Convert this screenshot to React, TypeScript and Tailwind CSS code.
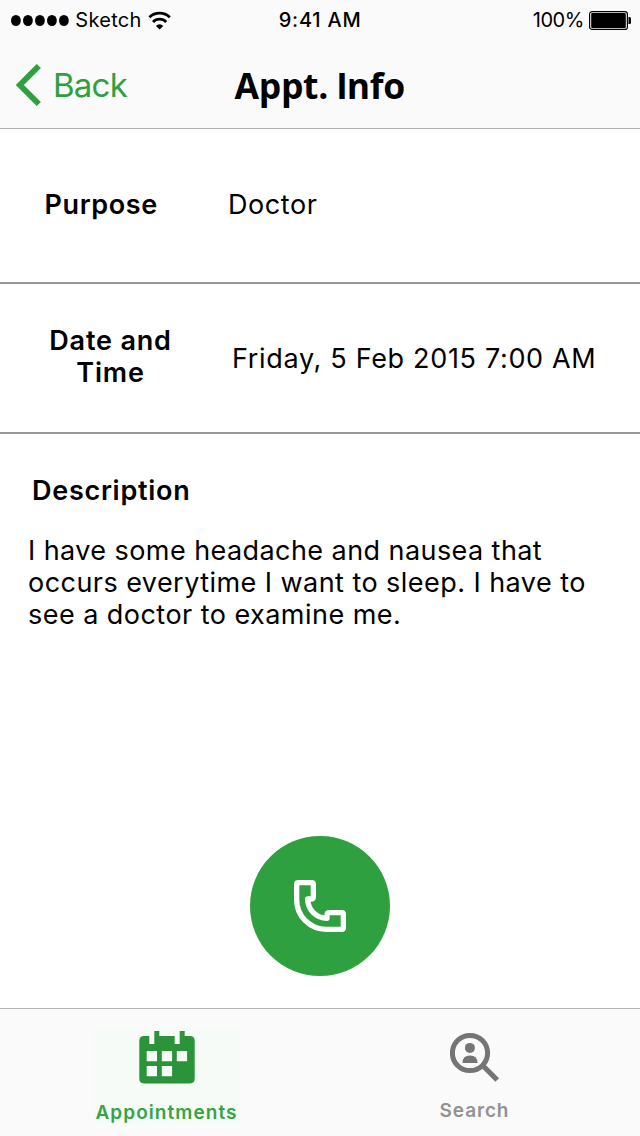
import React from 'react';

function StatusBar() {
  return (
    <div className="grid h-10 grid-cols-[1fr_84px_1fr] items-center text-[20px] leading-10">
      <div className="flex items-center pl-[11px]">
        <svg className="h-[11px] w-[58px]" viewBox="0 0 58 11" fill="#000">
          {[5, 17, 29, 41, 53].map((cx) => (
            <ellipse key={cx} cx={cx - 0.1} cy="5.5" rx="4.9" ry="5.5" />
          ))}
        </svg>
        <span className="ml-[6.3px] w-[73px] tracking-[0.28px]">Sketch</span>
        <svg className="h-[19px] w-[24px]" viewBox="0 0 24 19" fill="none" stroke="#000" strokeWidth="2.8">
          <path d="M1.4 6.2A14.8 14.8 0 0 1 21.8 6.2" />
          <path d="M5 10.9A9.3 9.3 0 0 1 18.2 10.9" />
          <path d="M11.6 18.6L7.9 14.9A5.2 5.2 0 0 1 15.3 14.9Z" fill="#000" stroke="none" />
        </svg>
      </div>
      <span className="whitespace-nowrap pl-[0.7px] font-medium tracking-[0.78px]">9:41 AM</span>
      <div className="flex items-center justify-end pr-[9px]">
        <span className="w-[56.3px] tracking-[-0.45px]">100%</span>
        <svg className="h-[20px] w-[42px]" viewBox="0 0 42 20">
          <rect x="0.6" y="1.6" width="37.8" height="17.8" rx="2.5" fill="none" stroke="#000" strokeWidth="1.2" />
          <rect x="2.2" y="3" width="34.6" height="15" rx="1" fill="#000" />
          <path d="M39.5 7H40.5Q42 7 42 8.5V12.5Q42 14 40.5 14H39.5Z" fill="#000" />
        </svg>
      </div>
    </div>
  );
}

function NavBar() {
  return (
    <div className="grid h-[88px] grid-cols-[1fr_172px_1fr] items-center pt-[2px]">
      <button className="flex items-center pl-[16px] text-[#2fa03f]">
        <svg className="h-[42px] w-[26px]" viewBox="0 0 26 42" fill="none" stroke="currentColor" strokeWidth="5.8">
          <path d="M22.8 2L3.8 21L22.8 40" />
        </svg>
        <span className="ml-[10.9px] text-[33px] leading-10 tracking-[-0.7px]">Back</span>
      </button>
      <h1 className="whitespace-nowrap pl-[0.5px] pt-[2px] font-['Open_Sans',sans-serif] text-[35.5px] font-bold leading-10 tracking-[-0.28px]">
        Appt. <span className="font-['Inter',sans-serif]">I</span>nfo
      </h1>
    </div>
  );
}

function CalendarIcon() {
  return (
    <svg className="h-[53px] w-[56px] shrink-0" viewBox="0 0 56 53">
      <path
        fill="#2b9339"
        d="M15.3 0H20.3V5H35.7V13H40.7V0H45.7V5H51Q55.7 5 55.7 9.7V47.6Q55.7 52.5 51 52.5H5Q0.3 52.5 0.3 47.6V9.7Q0.3 5 5 5H10.3V13H15.3Z"
      />
      <path
        fill="#f5fbf7"
        d="M7.7 20h10.3v10.3H7.7ZM22.8 20h10.3v10.3H22.8ZM37.8 20h10.3v10.3H37.8ZM7.7 35h10.3v10.3H7.7ZM22.8 35h10.3v10.3H22.8Z"
      />
    </svg>
  );
}

function PersonSearchIcon() {
  return (
    <svg className="h-[50px] w-[50px] shrink-0" viewBox="0 0 50 50">
      <circle cx="20" cy="21" r="17.6" fill="none" stroke="#757575" strokeWidth="5" />
      <path d="M32.2 33L47.2 48" stroke="#757575" strokeWidth="5.2" />
      <circle cx="19.9" cy="15.9" r="5" fill="#757575" />
      <path d="M12.5 31Q12.5 23.6 20 23.6Q27.5 23.6 27.5 31Z" fill="#757575" />
    </svg>
  );
}

export default function App() {
  return (
    <div className="flex h-[1136px] w-[640px] flex-col bg-white font-['Inter',sans-serif] text-black">
      <header className="h-[129px] shrink-0 border-b border-[#b2b2b2] bg-[#fafafa]">
        <StatusBar />
        <NavBar />
      </header>

      <main className="flex flex-1 flex-col text-[27px] leading-8">
        <section className="flex h-[155px] items-center border-b-2 border-[#979797] pb-px">
          <span className="w-[228px] pl-[44.5px] font-semibold tracking-[0.6px]">Purpose</span>
          <span className="tracking-[0.57px]">Doctor</span>
        </section>
        <section className="flex h-[150px] items-center border-b-2 border-[#979797] pt-[2px]">
          <span className="w-[232px] pl-[40px] pr-[51px] pb-[4px] text-center font-semibold tracking-[0.82px]">
            Date and
            <br />
            Time
          </span>
          <span className="whitespace-nowrap tracking-[0.67px]">Friday, 5 Feb 2015 7:00 AM</span>
        </section>
        <section className="pl-[28px] pt-[41px]">
          <h2 className="pl-[4px] font-semibold tracking-[0.72px]">Description</h2>
          <p className="mt-[28px] whitespace-nowrap">
            <span className="block tracking-[0.43px]">I have some headache and nausea that</span>
            <span className="block tracking-[0.45px]">occurs everytime I want to sleep. I have to</span>
            <span className="block tracking-[0.46px]">see a doctor to examine me.</span>
          </p>
        </section>
        <button
          aria-label="Call"
          className="mb-[32px] mt-auto flex size-[140px] items-center justify-center self-center rounded-full bg-[#2fa03f]"
        >
          <svg className="size-[52px]" viewBox="0 0 156 156" fill="none" stroke="#fff" strokeWidth="16" strokeLinejoin="round">
            <path d="M13 8H53Q58 8 58 13V50Q58 57 50 57H41C41 89 67 115 99 115V106Q99 98 106 98H143Q148 98 148 103V143Q148 148 143 148H96C48 148 8 108 8 60V13Q8 8 13 8Z" />
          </svg>
        </button>
      </main>

      <nav className="flex h-[128px] shrink-0 justify-between border-t border-[#b2b2b2] bg-[#fafafa] pl-[93px] pr-[130px] text-[19px] font-semibold">
        <div className="mt-[19px] flex h-[96px] w-[147px] flex-col items-center bg-[#f6fbf7] pt-[3px] text-[#34a445]">
          <CalendarIcon />
          <span className="mt-[17px] leading-6 tracking-[1.07px]">Appointments</span>
        </div>
        <div className="mt-[19px] flex h-[96px] w-[71px] flex-col items-center pt-[4px] text-[#929292]">
          <PersonSearchIcon />
          <span className="mt-[17px] leading-6 tracking-[0.88px]">Search</span>
        </div>
      </nav>
    </div>
  );
}
